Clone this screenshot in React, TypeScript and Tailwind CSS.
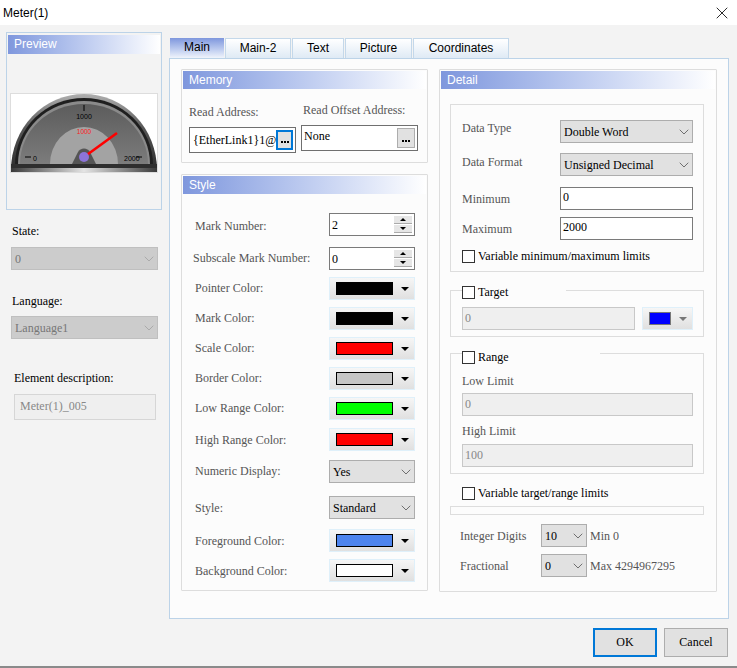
import { ChevronDown, X } from "lucide-react";
import type { ReactNode } from "react";

const serif = "font-['Liberation_Serif',serif]";

const PanelHeader = ({ title, className = "h-[18px] leading-[18px]" }: { title: string; className?: string }) => (
  <div className={`mx-px mt-px bg-gradient-to-r from-[#7f97dd] to-[#ffffff] pl-[6px] font-['Liberation_Sans',sans-serif] text-[12px] text-white ${className}`}>
    {title}
  </div>
);

const Select = ({ value, className = "" }: { value: string; className?: string }) => (
  <div className={`h-[23px] flex items-center justify-between border border-[#adadad] bg-[#e1e1e1] pl-[3px] text-[12px] text-black ${className}`}>
    <span>{value}</span>
    <ChevronDown size={16} strokeWidth={1.1} className="text-[#444]" />
  </div>
);

const DisabledSelect = ({ value }: { value: string }) => (
  <div className="w-[147px] h-[23px] ml-[11px] flex items-center justify-between border border-[#bfbfbf] bg-[#cccccc] pl-[3px] text-[12px] text-[#777]">
    <span>{value}</span>
    <ChevronDown size={16} strokeWidth={1} className="text-[#999]" />
  </div>
);

const TextBox = ({ value, className = "" }: { value: string; className?: string }) => (
  <div className={`h-[23px] border border-[#7a7a7a] bg-white pl-[2px] text-[12px] leading-[19px] text-black ${className}`}>{value}</div>
);

const DisabledBox = ({ value, className = "" }: { value: string; className?: string }) => (
  <div className={`h-[23px] border border-[#c8c8c8] bg-[#efefef] pl-[2px] text-[12px] leading-[20px] text-[#888] ${className}`}>{value}</div>
);

const ColorButton = ({ color }: { color: string }) => (
  <div className="w-[86px] h-[23px] flex items-center border border-[#dff0fa] bg-gradient-to-b from-[#f6f6f6] to-[#e0e0e0] pl-[6px]">
    <div className="w-[57px] h-[13px] border border-black" style={{ background: color }} />
    <div className="ml-[8px] w-0 h-0 border-x-[4px] border-x-transparent border-t-[4px] border-t-black" />
  </div>
);

const Spinner = ({ value }: { value: string }) => (
  <div className="w-[86px] h-[23px] flex items-center justify-between border border-[#7a7a7a] bg-white pl-[2px] pr-[2px] text-[12px] text-black">
    <span>{value}</span>
    <div className="flex flex-col gap-px">
      <div className="w-[18px] h-[8px] flex items-center justify-center bg-[#e6e6e6] border-b border-[#aaa]">
        <div className="w-0 h-0 border-x-[3px] border-x-transparent border-b-[3px] border-b-black" />
      </div>
      <div className="w-[18px] h-[8px] flex items-center justify-center bg-[#e6e6e6] border-b border-[#aaa]">
        <div className="w-0 h-0 border-x-[3px] border-x-transparent border-t-[3px] border-t-black" />
      </div>
    </div>
  </div>
);

const Row = ({
  label,
  className = "",
  labelClass = "",
  children,
}: {
  label: string;
  className?: string;
  labelClass?: string;
  children: ReactNode;
}) => (
  <div className={`flex items-center justify-between pl-[13px] pr-[12px] ${className}`}>
    <span className={`text-[12px] text-[#555] ${labelClass}`}>{label}</span>
    {children}
  </div>
);

const Check = ({ label, className = "" }: { label: string; className?: string }) => (
  <div className={`flex items-center gap-[3px] text-[12px] text-black ${className}`}>
    <div className="w-[13px] h-[13px] border border-[#333] bg-white" />
    <span>{label}</span>
  </div>
);

const Browse = ({ focused }: { focused?: boolean }) => (
  <div
    className={`w-[18px] h-[20px] flex items-end justify-center bg-[#e1e1e1] pb-[5px] ${
      focused ? "border-2 border-[#0078d7]" : "border border-[#adadad]"
    }`}
  >
    <div className="flex gap-px">
      <div className="w-[2px] h-[2px] bg-black" />
      <div className="w-[2px] h-[2px] bg-black" />
      <div className="w-[2px] h-[2px] bg-black" />
    </div>
  </div>
);

const MeterPreview = () => (
  <svg width="148" height="80" viewBox="0 0 148 80" className="block">
    <defs>
      <linearGradient id="rim" x1="0" y1="0" x2="0" y2="1">
        <stop offset="0" stopColor="#b0b0b0" />
        <stop offset="0.45" stopColor="#555555" />
        <stop offset="1" stopColor="#2a2a2a" />
      </linearGradient>
      <linearGradient id="base" x1="0" y1="0" x2="1" y2="0">
        <stop offset="0" stopColor="#3a3a3a" />
        <stop offset="0.5" stopColor="#e4e4e4" />
        <stop offset="1" stopColor="#3a3a3a" />
      </linearGradient>
      <linearGradient id="inner" x1="0" y1="0" x2="0" y2="1">
        <stop offset="0" stopColor="#5c5c5c" />
        <stop offset="1" stopColor="#7c7c7c" />
      </linearGradient>
    </defs>
    <rect x="0" y="0" width="148" height="80" fill="#ffffff" />
    <rect x="0.5" y="0.5" width="147" height="79" fill="none" stroke="#dddddd" />
    <path d="M1 77 A73 76 0 0 1 147 77 L147 79 L1 79 Z" fill="url(#rim)" />
    <path d="M5 72 A69 67 0 0 1 143 72 Z" fill="#1f1f1f" />
    <path d="M8 71 A66 63 0 0 1 140 71 Z" fill="#8a8a8a" />
    <path d="M10 71 A64 60 0 0 1 138 71 Z" fill="url(#inner)" />
    <path d="M40 71 A34 37 0 0 1 108 71 Z" fill="#a3a3a3" />
    <path d="M62 71 L68 59 A7 7 0 0 1 80 59 L86 71 Z" fill="#555555" />
    <rect x="1" y="71" width="146" height="4" fill="#2e2e2e" />
    <rect x="1" y="75" width="146" height="4" rx="1" fill="url(#base)" />
    <line x1="74" y1="12" x2="74" y2="18" stroke="#000" strokeWidth="1" />
    <line x1="15" y1="64" x2="21" y2="64" stroke="#000" strokeWidth="1" />
    <line x1="126" y1="64" x2="132" y2="64" stroke="#000" strokeWidth="1" />
    <text x="74" y="26" textAnchor="middle" fontFamily="Liberation Sans, sans-serif" fontSize="7" fill="#000">1000</text>
    <text x="74" y="41" textAnchor="middle" fontFamily="Liberation Sans, sans-serif" fontSize="6.5" fill="#ff2020">1000</text>
    <text x="23" y="68" fontFamily="Liberation Sans, sans-serif" fontSize="7" fill="#000">0</text>
    <text x="114" y="68" fontFamily="Liberation Sans, sans-serif" fontSize="7" fill="#000">2000</text>
    <line x1="74" y1="64" x2="107" y2="40" stroke="#ff0000" strokeWidth="2.5" />
    <circle cx="74" cy="64" r="5" fill="#8c74d8" />
  </svg>
);

const tabs = [
  { name: "Main", width: "w-[54px]", active: true },
  { name: "Main-2", width: "w-[66px]" },
  { name: "Text", width: "w-[52px]" },
  { name: "Picture", width: "w-[67px]" },
  { name: "Coordinates", width: "w-[96px]" },
];

const App = () => {
  return (
    <div className={`w-[737px] h-[668px] flex flex-col overflow-hidden bg-[#f3f3f3] ${serif}`}>
      <div className="h-[25px] shrink-0 flex items-center justify-between bg-white pl-[3px] pr-[5px] font-['Liberation_Sans',sans-serif] text-[12px] text-black">
        <span>Meter(1)</span>
        <X size={20} strokeWidth={1} className="text-black" />
      </div>

      <div className="flex h-[594px] shrink-0">
        <aside className="w-[169px] shrink-0">
          <div className="ml-[6px] mt-[7px] w-[156px] h-[178px] border border-[#bcd3e8] bg-[#f3f3f3] pt-px">
            <PanelHeader title="Preview" className="h-[19px] leading-[19px]" />
            <div className="ml-[3px] mt-[39px]">
              <MeterPreview />
            </div>
          </div>
          <div className="ml-[12px] mt-[14px] text-[12px] leading-[14px] text-black">State:</div>
          <div className="mt-[9px]"><DisabledSelect value="0" /></div>
          <div className="ml-[12px] mt-[24px] text-[12px] leading-[14px] text-black">Language:</div>
          <div className="mt-[8px]"><DisabledSelect value="Language1" /></div>
          <div className="ml-[14px] mt-[32px] text-[12px] leading-[14px] text-black">Element description:</div>
          <div className="ml-[14px] mt-[9px] w-[142px] h-[26px] border border-[#d6d6d6] bg-[#efefef] pl-[5px] text-[12px] leading-[23px] text-[#888]">
            Meter(1)_005
          </div>
        </aside>

        <main className="pt-[13px]">
          <div className="flex gap-px pl-px h-[20px] font-['Liberation_Sans',sans-serif] text-[12px] text-black">
            {tabs.map((t) => (
              <div
                key={t.name}
                className={`${t.width} h-[20px] text-center leading-[19px] ${
                  t.active
                    ? "bg-gradient-to-b from-[#7f97dd] to-[#f0f4fb]"
                    : "border border-b-0 border-[#c4d8ea] bg-gradient-to-b from-[#ffffff] to-[#dfeaf5]"
                }`}
              >
                {t.name}
              </div>
            ))}
          </div>

          <div className="w-[560px] h-[561px] flex gap-[11px] border border-[#bcd3e8] bg-[#fcfcfc] pl-[11px] pt-[10px]">
            <div className="w-[247px] shrink-0">
              <section className="h-[94px] border border-[#dddddd] rounded-[1px]">
                <PanelHeader title="Memory" />
                <div className="flex gap-[5px] pl-[7px] mt-[14px]">
                  <div className="w-[107px] mt-[2px]">
                    <div className="text-[12px] leading-[14px] text-[#555]">Read Address:</div>
                    <div className="mt-[8px] h-[26px] flex items-center justify-between border border-[#6f6f6f] bg-white pl-[3px] pr-[2px] text-[12px] text-black">
                      <span className="whitespace-nowrap">{"{EtherLink1}1@"}</span>
                      <Browse focused />
                    </div>
                  </div>
                  <div className="w-[117px]">
                    <div className="pl-[2px] text-[12px] leading-[14px] text-[#555]">Read Offset Address:</div>
                    <div className="mt-[8px] h-[26px] flex justify-between border border-[#6f6f6f] bg-white pl-[2px] pr-[2px] pt-[2px] text-[12px] leading-[16px] text-black">
                      <span>None</span>
                      <Browse />
                    </div>
                  </div>
                </div>
              </section>

              <section className="mt-[11px] h-[417px] border border-[#dddddd] rounded-[1px]">
                <PanelHeader title="Style" />
                <Row label="Mark Number:" labelClass="mt-[2px]" className="mt-[19px]"><Spinner value="2" /></Row>
                <Row label="Subscale Mark Number:" labelClass="-mt-[2px]" className="mt-[11px] !pl-[11px]"><Spinner value="0" /></Row>
                <Row label="Pointer Color:" labelClass="-mt-[2px]" className="mt-[7px]"><ColorButton color="#000000" /></Row>
                <Row label="Mark Color:" labelClass="-mt-[2px]" className="mt-[7px]"><ColorButton color="#000000" /></Row>
                <Row label="Scale Color:" labelClass="-mt-[2px]" className="mt-[7px]"><ColorButton color="#ff0000" /></Row>
                <Row label="Border Color:" labelClass="-mt-[2px]" className="mt-[7px]"><ColorButton color="#c6c6c6" /></Row>
                <Row label="Low Range Color:" labelClass="-mt-[2px]" className="mt-[7px]"><ColorButton color="#00ff00" /></Row>
                <Row label="High Range Color:" className="mt-[8px]"><ColorButton color="#ff0000" /></Row>
                <Row label="Numeric Display:" labelClass="-mt-[2px]" className="mt-[9px]"><Select value="Yes" className="w-[86px]" /></Row>
                <Row label="Style:" className="mt-[13px]"><Select value="Standard" className="w-[86px]" /></Row>
                <Row label="Foreground Color:" className="mt-[10px]"><ColorButton color="#4d84ee" /></Row>
                <Row label="Background Color:" className="mt-[7px]"><ColorButton color="#ffffff" /></Row>
              </section>
            </div>

            <section className="w-[278px] h-[523px] border border-[#dddddd] rounded-[1px]">
              <PanelHeader title="Detail" />
              <div className="ml-[10px] w-[254px] mt-[15px] h-[168px] border border-[#dddddd] pl-[11px] pr-[10px] pt-[15px]">
                <div className="flex items-center justify-between">
                  <span className="text-[12px] text-[#555] -mt-[7px]">Data Type</span>
                  <Select value="Double Word" className="w-[133px]" />
                </div>
                <div className="mt-[10px] flex items-center justify-between">
                  <span className="text-[12px] text-[#555] -mt-[5px]">Data Format</span>
                  <Select value="Unsigned Decimal" className="w-[133px]" />
                </div>
                <div className="mt-[11px] flex items-center justify-between">
                  <span className="text-[12px] text-[#555]">Minimum</span>
                  <TextBox value="0" className="w-[133px]" />
                </div>
                <div className="mt-[7px] flex items-center justify-between">
                  <span className="text-[12px] text-[#555]">Maximum</span>
                  <TextBox value="2000" className="w-[133px]" />
                </div>
                <Check label="Variable minimum/maximum limits" className="mt-[7px]" />
              </div>

              <div className="relative ml-[10px] w-[254px] mt-[18px] h-[47px] border border-[#dddddd] pl-[11px] pr-[10px] pt-[16px]">
                <div className="absolute left-[11px] -top-[8px] w-[104px] bg-[#fcfcfc]">
                  <Check label="Target" />
                </div>
                <div className="flex justify-between">
                  <DisabledBox value="0" className="w-[173px]" />
                  <div className="w-[51px] h-[23px] flex items-center border border-[#dff0fa] bg-gradient-to-b from-[#f6f6f6] to-[#e0e0e0] pl-[6px]">
                    <div className="w-[22px] h-[13px] border border-[#777] bg-[#0000ff]" />
                    <div className="ml-[8px] w-0 h-0 border-x-[4px] border-x-transparent border-t-[4px] border-t-[#777]" />
                  </div>
                </div>
              </div>

              <div className="relative ml-[10px] w-[254px] mt-[16px] h-[121px] border border-[#dddddd] pl-[11px] pr-[10px] pt-[20px]">
                <div className="absolute left-[11px] -top-[6px] w-[138px] bg-[#fcfcfc]">
                  <Check label="Range" />
                </div>
                <div className="text-[12px] leading-[14px] text-[#555]">Low Limit</div>
                <DisabledBox value="0" className="mt-[5px]" />
                <div className="mt-[8px] text-[12px] leading-[14px] text-[#555]">High Limit</div>
                <DisabledBox value="100" className="mt-[6px]" />
              </div>

              <Check label="Variable target/range limits" className="ml-[22px] mt-[10px]" />
              <div className="ml-[10px] w-[254px] mt-[4px] h-[9px] border border-[#dddddd]" />

              <div className="ml-[20px] mt-[9px] flex items-center text-[12px] text-[#555]">
                <span className="w-[81px]">Integer Digits</span>
                <Select value="10" className="w-[46px]" />
                <span className="ml-[3px]">Min 0</span>
              </div>
              <div className="ml-[20px] mt-[7px] flex items-center text-[12px] text-[#555]">
                <span className="w-[81px]">Fractional</span>
                <Select value="0" className="w-[46px]" />
                <span className="ml-[3px]">Max 4294967295</span>
              </div>
            </section>
          </div>
        </main>
      </div>

      <div className="flex-1 flex justify-end gap-[7px] pr-[9px] pt-[9px] text-[12px] text-black">
        <div className="w-[64px] h-[29px] border-2 border-[#0078d7] bg-[#e1e1e1] text-center leading-[25px]">OK</div>
        <div className="w-[64px] h-[29px] border border-[#adadad] bg-[#e1e1e1] text-center leading-[27px]">Cancel</div>
      </div>
      <div className="h-[2px] shrink-0 bg-[#8a8a8a]" />
    </div>
  );
};

export default App;
